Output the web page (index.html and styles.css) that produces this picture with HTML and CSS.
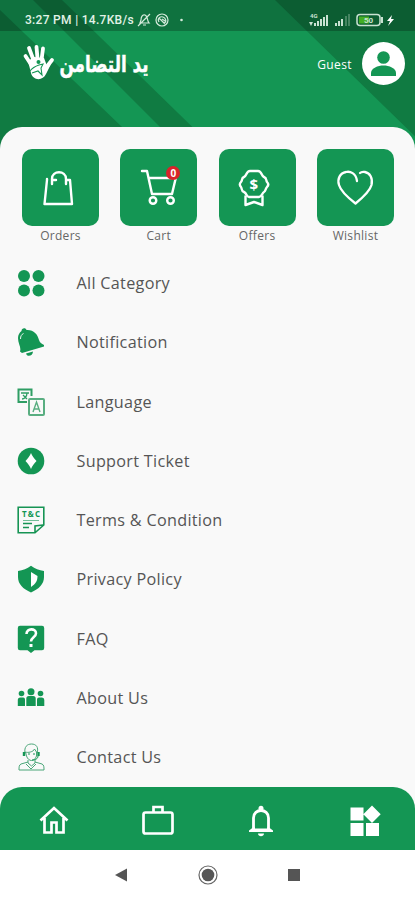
FILE: index.html
```
<!DOCTYPE html>
<html lang="en">
<head>
    <meta charset="UTF-8">
    <meta name="viewport" content="width=device-width, initial-scale=1.0">
    <title>يد التضامن</title>
    <link rel="stylesheet" href="styles.css">
</head>
<body>
    <div class="app">
        <header class="header">
            <svg class="header-bg" viewBox="0 0 415 150">
                <rect width="415" height="150" fill="#149654"/>
                <path d="M0 10L146 150H0zM33 0H62L216 150H183zM275 0H415V150H429z" fill="#107b42"/>
            </svg>
            <div class="status-bar">
                <span class="clock">3:27 PM | 14.7KB/s</span>
                <svg class="status-left" width="50" height="16" viewBox="0 0 50 16" fill="none" stroke="#d4eadb" stroke-width="1.2">
                    <path d="M3 11h9c-2-2-1-7-4-8S4 6 4 8zM6 13h3M1 14L13 2"/>
                    <circle cx="25" cy="8" r="6"/>
                    <path d="M22 10c-2-3 1-6 4-5s4 5 1 6M22 6l6 6M25 7l3 2"/>
                    <circle cx="44.500" cy="8" r="1.300" fill="#d4eadb" stroke="none"/>
                </svg>
                <svg class="status-right" width="88" height="16" viewBox="0 0 88 16" fill="#c9e2d2">
                    <text class="net" x="1" y="6">4G</text>
                    <path d="M0 10h4l-2 4zM5 11h2v3H5zM8 9h2v5H8zM11 7h2v7h-2zM14 5h2v9h-2zM17 3h2v11h-2zM26 11h2v3h-2zM29 9h2v5h-2zM32 7h2v7h-2z"/>
                    <path d="M36 4h2v10h-2zM39 2h2v12h-2z" opacity=".3"/>
                    <rect x="48" y="2.500" width="23" height="11" rx="3" fill="none" stroke="#c9e2d2" stroke-width="1.500"/>
                    <path d="M72 5h2v6h-2z"/>
                    <rect x="50" y="4.500" width="10" height="7" fill="#43ae25"/>
                    <text class="charge" x="55" y="11">50</text>
                    <path d="M83 3l-5 6h3l-2 5 6-7h-3z" fill="#fff"/>
                </svg>
            </div>
            <div class="brand-row">
                <svg class="logo" width="128" height="40" viewBox="0 0 128 40">
                    <g fill="none" stroke="#fff" stroke-width="3.800" stroke-linecap="round">
                        <path d="M10 24L3.500 14M13 22L7 6M16 22L14.500 5M19 22L21 6.500M23 27L30 18"/>
                    </g>
                    <path d="M6 19l6-4 10 1 3 8 4-2-5 10c-3 7-13 7-15-1z" fill="#fff"/>
                    <circle cx="16.500" cy="20" r="2" fill="#149654"/>
                    <path d="M8 29c3-4 6-5 9-6l4-1-2 4 1 7-4-4-6 2" fill="none" stroke="#149654" stroke-width="1.100"/>
                    <text class="brand" x="82" y="30" text-anchor="middle" direction="rtl" textLength="89" lengthAdjust="spacingAndGlyphs">يد التضامن</text>
                </svg>
                <div class="user">
                    <span>Guest</span>
                    <svg class="avatar" width="43" height="43" viewBox="0 0 43 43">
                        <circle cx="21.500" cy="21.500" r="21.500" fill="#fff"/>
                        <circle cx="21.500" cy="15.500" r="6.300" fill="#149654"/>
                        <path d="M9 34v-3c0-5 7-7.500 12.500-7.500S34 26 34 31v3z" fill="#149654"/>
                    </svg>
                </div>
            </div>
        </header>

        <main class="sheet">
            <div class="tiles">
                <div class="tile">
                    <div class="tile-box">
                        <svg class="bag" width="36" height="40" viewBox="0 0 36 40" fill="none" stroke="#fff" stroke-width="2.400" stroke-linejoin="round" stroke-linecap="round">
                            <path d="M7 12L4.500 36h27.500L30 12h-4v4M7 12v-1M12 16v-5c0-9 14-9 14 0v1M12 12h4"/>
                        </svg>
                    </div>
                    <span>Orders</span>
                </div>
                <div class="tile">
                    <div class="tile-box">
                        <svg width="38" height="40" viewBox="0 0 38 40" fill="none" stroke="#fff" stroke-width="2.400" stroke-linejoin="round" stroke-linecap="round">
                            <path d="M2 3h5l5 23h20l4-17M9 10h25"/>
                            <circle cx="13" cy="32.500" r="3.300"/>
                            <circle cx="30.500" cy="32.500" r="3.300"/>
                        </svg>
                        <b class="count">0</b>
                    </div>
                    <span>Cart</span>
                </div>
                <div class="tile">
                    <div class="tile-box">
                        <svg class="medal" width="36" height="40" viewBox="0 0 36 40" fill="none" stroke="#fff" stroke-width="2.400" stroke-linejoin="round">
                            <path d="M14 3h8c4 0 3 5 6 6 3 1 2 4 3 5s2 3 0 5-1 4-3 5-2 5-5 5H13c-3 0-2-4-5-5s-2-4-3-5-2-3 0-5 0-4 3-5 2-6 6-6z"/>
                            <path d="M9.500 27.500V37l8.500-3 8.500 3v-9.500"/>
                            <text class="dollar" x="18" y="22" text-anchor="middle">$</text>
                        </svg>
                    </div>
                    <span>Offers</span>
                </div>
                <div class="tile">
                    <div class="tile-box">
                        <svg width="38" height="40" viewBox="0 0 38 40" fill="none" stroke="#fff" stroke-width="2.300" stroke-linejoin="round" stroke-linecap="round">
                            <path d="M21 13C20 5 14 3 10 4 4 5 1 11 3 17c2 7 12 15 16.500 18.500C25 31 34 23 35.500 17 37 10 34 5 29 4c-2-.4-4 0-5 1"/>
                        </svg>
                    </div>
                    <span>Wishlist</span>
                </div>
            </div>

            <ul class="menu">
                <li>
                    <svg viewBox="0 0 28 28"><circle cx="7" cy="7" r="6"/><circle cx="21.500" cy="7" r="6"/><circle cx="7" cy="21.500" r="6"/><circle cx="21.500" cy="21.500" r="6"/></svg>
                    <span>All Category</span>
                </li>
                <li>
                    <svg viewBox="0 0 28 28">
                        <path d="M4.500 3c0-3.500 4.500-3.500 5-1 7-.5 11 4 12.500 10 .8 2.500 2.500 3.500 5 5v1.500L5 25l-2-1.500c1.500-4-2-8-2-13.500 0-3 1.500-5.500 3.500-7z"/>
                        <path d="M9 25.500l7-2c0 4.500-6 6-7 2z"/>
                        <path d="M3.500 11c0-3 1-4.500 3-5.500" fill="none" stroke="#fff" stroke-width=".9"/>
                    </svg>
                    <span>Notification</span>
                </li>
                <li>
                    <svg viewBox="0 0 28 28" fill="none" stroke="#2f9e64">
                        <path d="M10 14H1.500V1.500h13V8" stroke-width="2"/>
                        <path d="M4 5h8M10 5c0 4-3 6-5 6M6 7l4 4" stroke-width="1.300"/>
                        <rect x="12" y="11" width="15" height="16" rx="1" stroke="#59ae81" stroke-width="2"/>
                        <path d="M16 24l3.500-10L23 24M17 21h5" stroke="#59ae81" stroke-width="1.400"/>
                    </svg>
                    <span>Language</span>
                </li>
                <li>
                    <svg viewBox="0 0 28 28"><circle cx="14" cy="14" r="13.300"/><path d="M14 6c1 3 3 5 5.500 8-2.500 3-4.500 5-5.500 8-1-3-3-5-5.500-8C11 11 13 9 14 6z" fill="#fff"/></svg>
                    <span>Support Ticket</span>
                </li>
                <li>
                    <svg viewBox="0 0 28 28" fill="none" stroke="#169454">
                        <path d="M1.200 1.200h25.600V19L18 26.800H1.200zM18 26v-6l8-1" stroke-width="1.600"/>
                        <path d="M6 14.500h16" stroke-width=".6"/>
                        <path d="M6 17.500h9M6 21.500h6" stroke-width="1.300"/>
                        <text class="tc" x="14" y="11" text-anchor="middle" textLength="18">T&amp;C</text>
                    </svg>
                    <span>Terms &amp; Condition</span>
                </li>
                <li>
                    <svg viewBox="0 0 28 28"><path d="M14 .8C18 4 22 5 27 6v6c0 7-5 12-13 15.500C6 24 1 19 1 12V6c5-1 9-2 13-5.200z"/><path d="M14 7l6.500 4c0 5-2 8-6.500 11z" fill="#fff"/></svg>
                    <span>Privacy Policy</span>
                </li>
                <li>
                    <svg viewBox="0 0 28 28"><path d="M3 .8h22q2.200 0 2.200 2.200v20q0 2.200-2.200 2.200h-7.500L14 28l-3.500-2.800H3Q.8 25.200.8 23V3Q.8.800 3 .8z"/><path d="M9.500 9c0-6 9.500-6 9.500-.8 0 4-5 4-5 8.300" fill="none" stroke="#fff" stroke-width="2.600"/><path d="M12.500 19h3v3h-3z" fill="#fff"/></svg>
                    <span>FAQ</span>
                </li>
                <li>
                    <svg viewBox="0 0 28 28"><circle cx="4.500" cy="9.500" r="2.800"/><circle cx="14" cy="7.800" r="3.500"/><circle cx="23.500" cy="9.500" r="2.800"/><path d="M.8 22v-6q0-2.500 2.500-2.500h3Q8 13.500 8 15.500V22zM9.300 22v-7.500q0-2.500 2.500-2.500h4.400q2.500 0 2.500 2.500V22zM20 22v-6.500q0-2 2-2h3q2.300 0 2.300 2.500v6z"/></svg>
                    <span>About Us</span>
                </li>
                <li>
                    <svg viewBox="0 0 28 28" fill="none" stroke="#4aa678" stroke-width="1">
                        <path d="M8 10C7 4 10 1 14.500 1S22 4 20 10M8.500 9c2 1 8 0 9-3l2 3v4c-2 6-8 6-10 0zM11 17v3l3.500 3 3.500-3v-3M11 19l-7 2c-2 1-2 3-2 6h25c0-3 0-5-2-6l-7-2M9 21l5 5 5-5"/>
                        <path d="M7 9v4M21.500 9v4" stroke="#149654" stroke-width="2.400"/>
                        <path d="M21 13c0 3-3 4-6 4M11 11h2M16 11h2" stroke="#149654"/>
                    </svg>
                    <span>Contact Us</span>
                </li>
            </ul>
        </main>

        <nav class="tabs">
            <svg viewBox="0 0 36 36" fill="none" stroke="#fff" stroke-width="2.700"><path d="M4.500 18.500L18 6l13.500 12.500M8.500 16v14.500h7v-10h5v10h7V16"/></svg>
            <svg viewBox="0 0 36 36" fill="none" stroke="#fff" stroke-width="2.700"><rect x="3.500" y="10.500" width="29" height="21" rx="2"/><path d="M13.500 10V5h9v5"/></svg>
            <svg viewBox="0 0 36 36" fill="#fff"><path d="M10.500 28V16c0-10 15-10 15 0v12" fill="none" stroke="#fff" stroke-width="2.800"/><path d="M6 30v-1.500l4-3h16l4 3V30z"/><path d="M12 24h12v2.500H12z" fill="#149654"/><circle cx="18" cy="6.300" r="2.500"/><path d="M15 31.500h6c0 3.500-6 3.500-6 0z"/></svg>
            <svg viewBox="0 0 36 36" fill="#fff"><path d="M3.500 5.500h13v13h-13zM3.500 21h13v13h-13zM19 21h13v13H19zM25 3.500l8.700 8.700-8.700 8.700-8.700-8.700z"/></svg>
        </nav>

        <div class="system-nav">
            <svg viewBox="0 0 22 22"><path d="M4 11l12-6.500v13z" fill="#555"/></svg>
            <svg viewBox="0 0 22 22"><circle cx="11" cy="11" r="9" fill="none" stroke="#666" stroke-width="1.200"/><circle cx="11" cy="11" r="6.300" fill="#555"/></svg>
            <svg viewBox="0 0 22 22"><path d="M5 5h12v12H5z" fill="#555"/></svg>
        </div>
    </div>
</body>
</html>
```
FILE: styles.css
```
* {
    box-sizing: border-box;
}
body {
    margin: 0;
    font-family: "Open Sans", "Noto Sans", sans-serif;
    background: #fff;
}
.app {
    display: flex;
    flex-direction: column;
    height: 900px;
    overflow: hidden;
    background: #f9f9f9;
}
.header {
    position: relative;
    height: 127px;
    flex: none;
    color: #fff;
}
.header-bg {
    position: absolute;
    top: 0;
    left: 0;
    width: 415px;
    height: 150px;
}
.status-bar {
    position: relative;
    display: flex;
    align-items: center;
    height: 31px;
    padding: 8px 18px 0 25px;
    background: rgba(0, 0, 0, 0.24);
}
.clock {
    width: 112px;
    font: 500 12px Roboto, sans-serif;
    letter-spacing: 0.3px;
    color: #e2f2e7;
    white-space: nowrap;
}
.status-right {
    margin-left: auto;
}
.net {
    font: bold 6px Roboto, sans-serif;
}
.charge {
    font: bold 8px Roboto, sans-serif;
}
.brand-row {
    position: relative;
    display: flex;
    justify-content: space-between;
    padding: 11px 10px 0 22px;
}
.logo {
    overflow: visible;
}
.brand {
    font: bold 23px "DejaVu Sans", sans-serif;
    fill: #fff;
    stroke: #fff;
    stroke-width: 0.5px;
}
.user {
    display: flex;
    align-items: center;
    gap: 10px;
    font-size: 12px;
    letter-spacing: 0.4px;
}
.user span {
    padding-top: 2px;
}
.sheet {
    position: relative;
    flex: 1;
    padding-top: 22px;
    border-radius: 22px 22px 0 0;
    background: #f9f9f9;
}
.tiles {
    display: flex;
    justify-content: space-between;
    padding: 0 21px 0 22px;
}
.tile {
    width: 77px;
    text-align: center;
    font-size: 12px;
    line-height: 19px;
    letter-spacing: 0.3px;
    color: #666;
}
.tile-box {
    position: relative;
    display: flex;
    align-items: center;
    justify-content: center;
    height: 77px;
    border-radius: 10px;
    background: #149654;
}
.bag,
.medal {
    margin-right: 6px;
}
.count {
    position: absolute;
    top: 17px;
    right: 17px;
    width: 14px;
    height: 14px;
    border-radius: 50%;
    background: #d8232a;
    color: #fff;
    font-size: 10px;
    line-height: 14px;
    letter-spacing: 0;
}
.dollar {
    font: bold 15px "Open Sans", sans-serif;
    fill: #fff;
    stroke: none;
}
.menu {
    margin: 8.5px 0 0;
    padding: 0;
    list-style: none;
}
.menu li {
    display: flex;
    align-items: center;
    gap: 32px;
    height: 59.25px;
    padding-left: 16.5px;
    font-size: 16.2px;
    letter-spacing: 0.3px;
    color: #555;
}
.menu svg {
    width: 28px;
    height: 28px;
    fill: #149654;
}
.menu svg[fill="none"] {
    fill: none;
}
.tc {
    font: bold 8px "Open Sans", sans-serif;
    letter-spacing: 0;
    fill: #149654;
    stroke: none;
}
.tabs {
    position: relative;
    display: flex;
    flex: none;
    justify-content: space-between;
    align-items: center;
    height: 63px;
    margin-top: -20px;
    padding: 3px 32px 0 36px;
    border-radius: 22px 22px 0 0;
    background: #149654;
}
.tabs svg {
    width: 36px;
    height: 36px;
}
.system-nav {
    display: flex;
    flex: none;
    justify-content: center;
    align-items: center;
    gap: 64px;
    height: 50px;
    background: #fff;
}
.system-nav svg {
    width: 22px;
    height: 22px;
}
```
